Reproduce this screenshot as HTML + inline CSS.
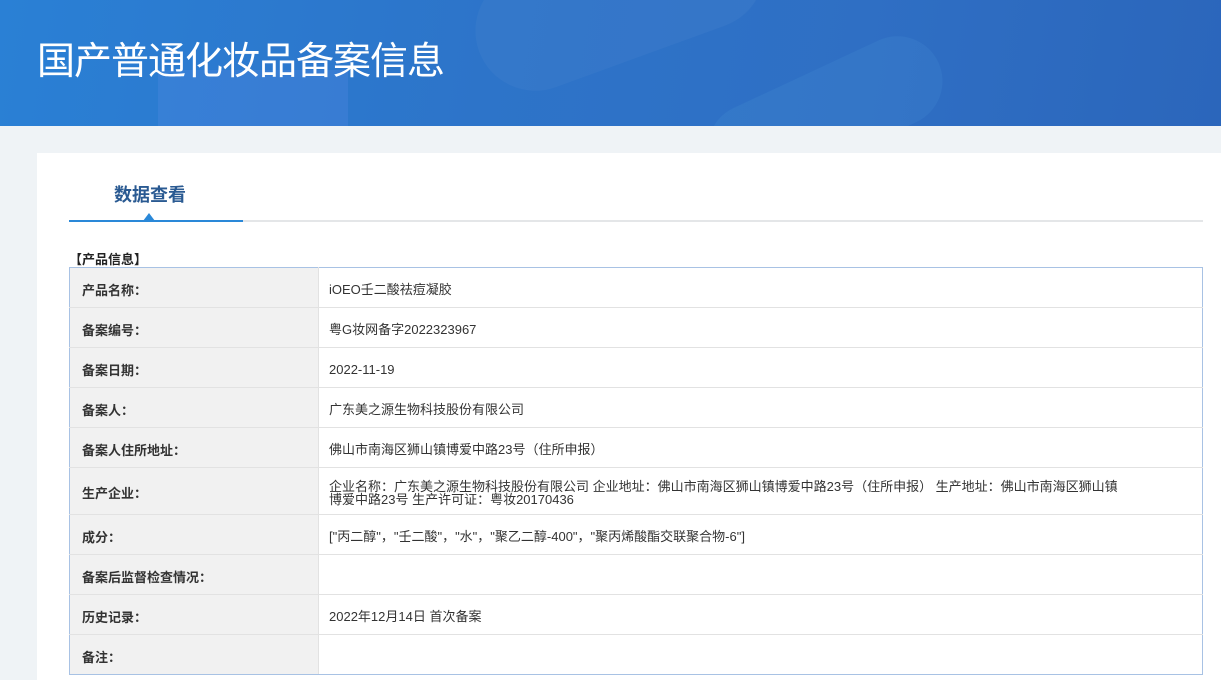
<!DOCTYPE html>
<html><head><meta charset="utf-8"><style>
*{margin:0;padding:0;box-sizing:border-box}
html,body{width:1221px;height:680px;overflow:hidden}
body{background:#eff3f6;font-family:"Liberation Sans","Noto Sans CJK SC",sans-serif;position:relative}
.hdr{position:absolute;left:0;top:0;width:1221px;height:126px;background:linear-gradient(100deg,#2a80d5 0%,#2d74c9 40%,#2f6fc4 70%,#2b66bb 100%);overflow:hidden}
.hdr .b1{position:absolute;left:158px;top:70px;width:190px;height:70px;background:rgba(90,140,230,.25)}
.hdr .b2{position:absolute;left:470px;top:-60px;width:300px;height:120px;border-radius:60px;background:rgba(255,255,255,.035);transform:rotate(-20deg)}
.hdr .b3{position:absolute;left:700px;top:70px;width:250px;height:90px;border-radius:45px;background:rgba(80,160,220,.15);transform:rotate(-25deg)}
.hdr h1{position:absolute;left:37px;top:30px;color:#fff;font-size:38px;font-weight:normal;letter-spacing:-1px}
.panel{position:absolute;left:37px;top:153px;width:1200px;height:540px;background:#fff}
.tab{position:absolute;left:114px;top:181px;font-size:18px;font-weight:bold;color:#2a5a92}
.line{position:absolute;left:69px;top:220px;width:1134px;height:2px;background:#e4e6e8}
.line i{position:absolute;left:0;top:0;width:174px;height:2px;background:#2a88d8}
.tri{position:absolute;left:143px;top:213px;width:0;height:0;border-left:6px solid transparent;border-right:6px solid transparent;border-bottom:8px solid #2a88d8}
.sec{position:absolute;left:69px;top:249px;font-size:13px;font-weight:bold;color:#222}
table{position:absolute;left:69px;top:267px;width:1134px;border-collapse:collapse;border:1px solid #a8c2e4;font-size:13px;color:#333}
td{border-bottom:1px solid #e2e2e2;height:40px;vertical-align:middle;padding-top:3px}
td.l{width:249px;background:#f1f1f1;font-weight:bold;padding-left:12px;border-right:1px solid #e2e2e2;color:#333}
td.v{padding-left:10px;line-height:13px}
tr:last-child td{border-bottom:1px solid #a8c2e4}
</style></head><body>
<div class="hdr"><div class="b1"></div><div class="b2"></div><div class="b3"></div><h1>国产普通化妆品备案信息</h1></div>
<div class="panel"></div>
<div class="tab">数据查看</div>
<div class="line"><i></i></div>
<div class="tri"></div>
<div class="sec">【产品信息】</div>
<table>
<tr><td class="l">产品名称：</td><td class="v">iOEO壬二酸祛痘凝胶</td></tr>
<tr><td class="l">备案编号：</td><td class="v">粤G妆网备字2022323967</td></tr>
<tr><td class="l">备案日期：</td><td class="v">2022-11-19</td></tr>
<tr><td class="l">备案人：</td><td class="v">广东美之源生物科技股份有限公司</td></tr>
<tr><td class="l">备案人住所地址：</td><td class="v">佛山市南海区狮山镇博爱中路23号（住所申报）</td></tr>
<tr><td class="l" style="height:47px">生产企业：</td><td class="v">企业名称：广东美之源生物科技股份有限公司 企业地址：佛山市南海区狮山镇博爱中路23号（住所申报） 生产地址：佛山市南海区狮山镇<br>博爱中路23号 生产许可证：粤妆20170436</td></tr>
<tr><td class="l">成分：</td><td class="v">["丙二醇"，"壬二酸"，"水"，"聚乙二醇-400"，"聚丙烯酸酯交联聚合物-6"]</td></tr>
<tr><td class="l">备案后监督检查情况：</td><td class="v"></td></tr>
<tr><td class="l">历史记录：</td><td class="v">2022年12月14日 首次备案</td></tr>
<tr><td class="l">备注：</td><td class="v"></td></tr>
</table>
</body></html>
